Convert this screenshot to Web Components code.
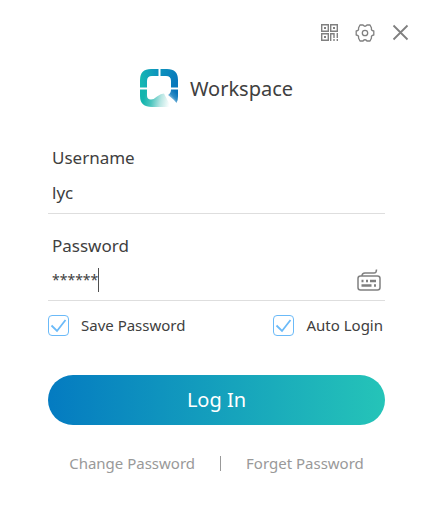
<!DOCTYPE html>
<html lang="en">
<head>
<meta charset="utf-8">
<title>Workspace</title>
<style>
  body { margin: 0; background: #fff; color: #404040; font-family: "Noto Sans", "Open Sans", sans-serif; }
</style>
</head>
<body>
<login-window></login-window>
<script>
const define = (name, html, setup) => customElements.define(name, class extends HTMLElement {
  constructor() {
    super();
    this.attachShadow({ mode: 'open' }).innerHTML = html;
  }
  connectedCallback() { if (setup) setup(this, this.shadowRoot); }
});

define('icon-button', `
<style>
  :host { display: block; }
  button { display: block; border: 0; padding: 0; background: none; color: inherit; cursor: pointer; }
</style>
<button type="button"><slot></slot></button>`, (el, root) => {
  root.querySelector('button').setAttribute('aria-label', el.getAttribute('label'));
});

define('brand-logo', `
<style>
  :host { display: flex; align-items: center; justify-content: center; gap: 11px; font-size: 20px; line-height: 28px; }
  svg { display: block; }
</style>
<svg width="39" height="39" viewBox="0 0 39 39" aria-hidden="true">
  <defs>
    <linearGradient id="a" x1="0" y1="0.6" x2="1" y2="0.4"><stop offset="0" stop-color="#16b9b2"/><stop offset="1" stop-color="#0d93bd"/></linearGradient>
    <linearGradient id="d" x1="0" y1="0" x2="1" y2="0.5"><stop offset="0" stop-color="#0d93bd"/><stop offset="1" stop-color="#0877bb"/></linearGradient>
    <linearGradient id="b" gradientUnits="userSpaceOnUse" x1="4" y1="28" x2="30" y2="33"><stop offset="0" stop-color="#14b5ae"/><stop offset="0.3" stop-color="#4cc5be"/><stop offset="0.65" stop-color="#b9e6e3"/><stop offset="1" stop-color="#ffffff"/></linearGradient>
    <linearGradient id="c" gradientUnits="userSpaceOnUse" x1="30" y1="31" x2="37" y2="24"><stop offset="0" stop-color="#b9d8ea"/><stop offset="0.5" stop-color="#2f8cc5"/><stop offset="1" stop-color="#0873b9"/></linearGradient>
  </defs>
  <path fill="url(#a)" d="M11 0h7.500v7h-6.500q-5 0-5 5v6.500H0V11Q0 0 11 0z"/>
  <path fill="url(#d)" d="M20.500 0h6.500q11 0 11 11v7.500h-7v-6.500q0-5-5-5h-5.500z"/>
  <path fill="url(#b)" d="M0 20.500h7v6q0 4 4 4 3 0 6-3 4-3 7-3l7 13.500H12Q0 38 0 27z"/>
  <path fill="url(#c)" d="M31 20.500h7v7q0 4-1.500 6.500-2-3-8.500-8 3-2 3-5.500z"/>
</svg>
<slot></slot>`);

define('form-field', `
<style>
  :host { display: block; border-bottom: 1px solid #dedede; padding: 0 4px; }
  label { display: block; font-size: 17px; line-height: 26px; }
  .row { display: flex; align-items: center; box-sizing: border-box; height: 42px; padding-top: 2px; }
  input { field-sizing: content; min-width: 1px; border: 0; padding: 0; outline: 0; background: none; font: inherit; font-size: 17px; line-height: 24px; color: inherit; }
  :host([masked]) .row { height: 41px; padding-top: 0; }
  :host([masked]) input { font-size: 14px; }
  .caret { display: none; width: 1px; height: 24px; background: #505050; }
  :host([masked]) .caret { display: block; }
  slot { display: block; margin-left: auto; }
</style>
<label for="field"></label>
<div class="row"><input id="field" type="text" autocomplete="off" spellcheck="false"><span class="caret"></span><slot></slot></div>`, (el, root) => {
  root.querySelector('label').textContent = el.getAttribute('label');
  root.querySelector('input').value = el.getAttribute('value');
});

define('check-option', `
<style>
  :host { display: block; font-size: 15px; line-height: 22px; }
  label { display: flex; align-items: center; gap: 12px; }
  input { appearance: none; display: block; box-sizing: border-box; width: 21px; height: 21px; margin: 0; border: 1px solid #6bbaf8; border-radius: 4px; background: #fff; }
  .box { display: grid; }
  .box > * { grid-area: 1 / 1; }
  svg { display: block; pointer-events: none; visibility: hidden; }
  input:checked + svg { visibility: visible; }
</style>
<label><span class="box"><input type="checkbox" checked><svg width="21" height="21" viewBox="0 0 21 21" fill="none" stroke="#6bbaf8" stroke-width="1.8"><path d="M3.500 10.500l5.500 5.500 8.500-11"/></svg></span><slot></slot></label>`);

define('primary-button', `
<style>
  :host { display: block; }
  button { display: block; width: 100%; height: 50px; border: 0; border-radius: 25px; padding: 0; background: linear-gradient(90deg, #047bc1, #25c4b8); color: #fff; font: inherit; font-size: 20px; line-height: 28px; cursor: pointer; }
</style>
<button type="submit"><slot></slot></button>`);

define('login-window', `
<style>
  :host { display: block; }
  header { display: flex; justify-content: flex-end; gap: 17px; padding: 24px 18px 0 0; color: #808080; }
  svg { display: block; }
  main { padding: 27px 42px 0 48px; }
  .user { margin-top: 37px; }
  .pass { margin-top: 19px; }
  .options { display: flex; justify-content: space-between; padding: 13px 2px 0 0; }
  primary-button { margin-top: 39px; }
  nav { display: flex; align-items: center; justify-content: center; gap: 25px; margin-top: 27px; font-size: 15px; line-height: 22px; }
  a { color: #999; text-decoration: none; }
  i { width: 1px; height: 15px; background: #999; }
</style>
<header>
  <icon-button label="QR code"><svg width="17" height="17" viewBox="0 0 17 17" fill="none" stroke="currentColor" stroke-width="1.4"><path d="M.7.7h6.600v6.600H.7zM9.700.7h6.600v6.600H9.700zM.7 9.700h6.600v6.600H.7zM9.700 17V9.700h3.300v4.300M16.300 9v5M13 15v2M16.300 15v2"/><path d="M3 4h2M12 4h2M3 13h2" stroke-width="2"/></svg></icon-button>
  <icon-button label="Settings"><svg width="20" height="18" viewBox="0 0 20 18" fill="none" stroke="currentColor" stroke-width="1.300" stroke-linejoin="round"><path d="M5 1h3q2 2.500 4 0h3l1.500 3q-.8 2.500 2.300 3v4q-3.100.5-2.300 3L15 17h-3q-2-2.500-4 0H5l-1.500-3q.8-2.500-2.300-3V7q3.100-.5 2.300-3z"/><circle cx="10" cy="9" r="2.700"/></svg></icon-button>
  <icon-button label="Close"><svg width="17" height="17" viewBox="0 0 17 17" fill="none" stroke="currentColor" stroke-width="1.800"><path d="M1.500 1.500l14 14M15.500 1.500l-14 14"/></svg></icon-button>
</header>
<main>
  <brand-logo>Workspace</brand-logo>
  <form>
    <form-field class="user" label="Username" value="lyc"></form-field>
    <form-field class="pass" label="Password" value="******" masked>
      <icon-button label="On-screen keyboard"><svg width="24" height="22" viewBox="0 0 24 22" fill="none" stroke="#808080" stroke-width="1.500"><rect x="1" y="7" width="22" height="14" rx="2.500"/><path d="M5 7q0-3 3-3h9q2.500 0 2.500-3.500"/><path d="M4.500 12h2M9 12h2M13 12h6M4.500 16.500h10M17 16.500h2" stroke-width="2.400"/></svg></icon-button>
    </form-field>
    <div class="options"><check-option>Save Password</check-option><check-option>Auto Login</check-option></div>
    <primary-button>Log In</primary-button>
  </form>
  <nav><a href="#change">Change Password</a><i></i><a href="#forget">Forget Password</a></nav>
</main>`);
</script>
</body>
</html>
